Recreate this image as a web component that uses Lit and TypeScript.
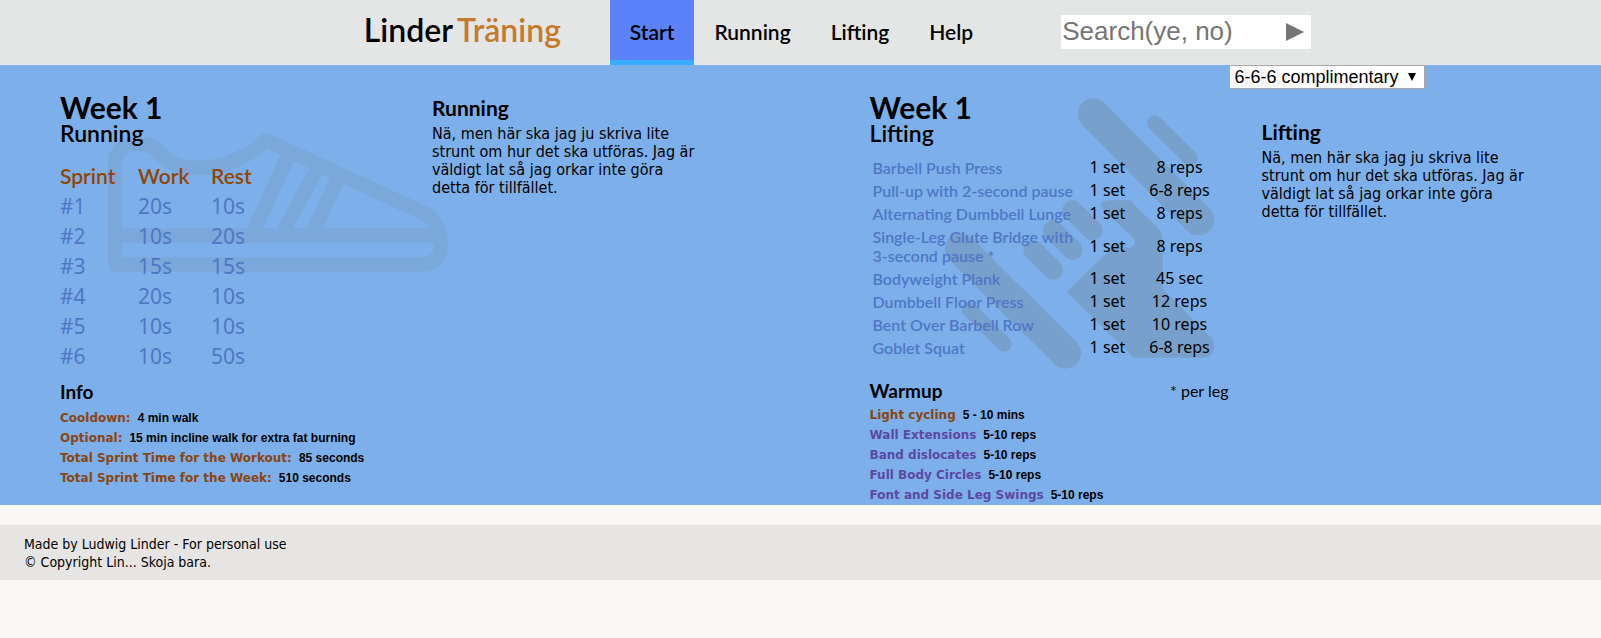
import { LitElement, html, css } from "lit";
import { customElement } from "lit/decorators.js";

const sprints = [
  ["#1", "20s", "10s"],
  ["#2", "10s", "20s"],
  ["#3", "15s", "15s"],
  ["#4", "20s", "10s"],
  ["#5", "10s", "10s"],
  ["#6", "10s", "50s"],
];

const lifts = [
  ["Barbell Push Press", "1 set", "8 reps"],
  ["Pull-up with 2-second pause", "1 set", "6-8 reps"],
  ["Alternating Dumbbell Lunge", "1 set", "8 reps"],
  ["Single-Leg Glute Bridge with 3-second pause *", "1 set", "8 reps"],
  ["Bodyweight Plank", "1 set", "45 sec"],
  ["Dumbbell Floor Press", "1 set", "12 reps"],
  ["Bent Over Barbell Row", "1 set", "10 reps"],
  ["Goblet Squat", "1 set", "6-8 reps"],
];

const info = [
  ["Cooldown:", "4 min walk"],
  ["Optional:", "15 min incline walk for extra fat burning"],
  ["Total Sprint Time for the Workout:", "85 seconds"],
  ["Total Sprint Time for the Week:", "510 seconds"],
];

const warmup = [
  ["Wall Extensions", "5-10 reps"],
  ["Band dislocates", "5-10 reps"],
  ["Full Body Circles", "5-10 reps"],
  ["Font and Side Leg Swings", "5-10 reps"],
];

const description =
  "Nä, men här ska jag ju skriva lite strunt om hur det ska utföras. Jag är väldigt lat så jag orkar inte göra detta för tillfället.";

@customElement("app-root")
export class AppRoot extends LitElement {
  static styles = css`
    :host {
      display: block;
      min-height: 100vh;
      background: #f9f8f6;
      color: #000;
      font-family: "DejaVu Sans Condensed", "DejaVu Sans", sans-serif;
    }
    * {
      box-sizing: border-box;
    }
    h1, h2, h3, p, dl, dd {
      margin: 0;
    }
    .top {
      display: flex;
      justify-content: center;
      align-items: center;
      height: 65px;
      padding-left: 74px;
      background: #e4e6e5;
    }
    .logo {
      width: 246px;
      padding-bottom: 5px;
      color: #000;
      font: 600 32px/40px Lato, sans-serif;
      white-space: nowrap;
      text-decoration: none;
    }
    .logo-accent {
      margin-left: 4px;
      color: #c47a2c;
    }
    .nav {
      display: flex;
      align-self: stretch;
    }
    .tab {
      padding: 0 20px;
      border-bottom: 5px solid transparent;
      color: #000;
      font: 600 21px/64px Lato, sans-serif;
      text-decoration: none;
    }
    .tab.active {
      border-color: #38acff;
      background: #5b82fb;
    }
    .search {
      display: flex;
      width: 250px;
      height: 34px;
      margin: 0 0 2px 68px;
      background: #fff;
    }
    .query {
      flex: 1;
      min-width: 0;
      padding: 0 1px;
      border: 0;
      background: none;
      font: 26px "Liberation Sans", sans-serif;
    }
    .query::placeholder {
      color: #757575;
    }
    .go {
      display: flex;
      align-items: center;
      padding: 0 7px;
      border: 0;
      background: none;
    }
    .main {
      display: grid;
      grid-template-columns: 1fr 1fr;
      background: #7db0ea;
    }
    .program {
      position: relative;
      display: flex;
      align-items: flex-start;
      padding-left: 60px;
    }
    .program.lifting {
      padding-left: 69px;
    }
    .mark {
      position: absolute;
      fill: none;
      stroke-linejoin: round;
    }
    .shoe {
      left: 107px;
      top: 67px;
      stroke: #7aa8db;
      stroke-width: 44px;
    }
    .dumbbell {
      left: 144px;
      top: 33px;
      stroke: #78a0cc;
      stroke-linecap: round;
    }
    .palm {
      fill: #78a0cc;
      stroke: none;
    }
    .plan {
      position: relative;
      width: 372px;
      padding-top: 25px;
    }
    .lifting .plan {
      width: 359px;
    }
    .week {
      font: 700 30px/34px Lato, sans-serif;
    }
    .kind {
      font: 600 23px/18px Lato, sans-serif;
    }
    .sprints {
      margin-top: 19px;
      border-collapse: collapse;
      color: #4f77c4;
      font: 21px/30px "Noto Sans", sans-serif;
      text-align: left;
      table-layout: fixed;
      width: 206px;
    }
    .sprints th, .sprints td {
      padding: 0;
      width: 73px;
    }
    .sprints th:first-child {
      width: 78px;
    }
    .sprints th {
      color: #914600;
      font: 600 21px/30px Lato, sans-serif;
    }
    .lifts {
      width: 100%;
      margin-top: 14px;
      border-collapse: collapse;
      table-layout: fixed;
    }
    .lifts td {
      padding: 2px 0;
      font: 16px/19px "Noto Sans", sans-serif;
      text-align: center;
    }
    .lifts .name {
      width: 212px;
      padding-left: 3px;
      color: #4f77c4;
      font: 600 16px/19px Lato, sans-serif;
      text-align: left;
    }
    .lifts .sets {
      width: 52px;
    }
    .lifts .reps {
      padding-right: 3px;
    }
    .extra {
      display: flex;
      justify-content: space-between;
      margin-top: 9px;
    }
    .lifting .extra {
      margin-top: 20px;
    }
    .sub {
      font: 700 19px/24px Lato, sans-serif;
    }
    .note {
      font: 16px/24px Lato, sans-serif;
    }
    .facts {
      margin-top: 4px;
      font: 700 12px/20px "Liberation Sans", sans-serif;
    }
    .lifting .facts {
      margin-top: 2px;
    }
    .fact {
      display: flex;
      gap: 7px;
    }
    .term {
      color: #8a4510;
      font-family: "DejaVu Sans", sans-serif;
    }
    .term a {
      color: #5c48a2;
      text-decoration: none;
    }
    .lifting .aside {
      display: flex;
      flex-direction: column;
    }
    .pick {
      width: 196px;
      height: 24px;
      padding: 0 5px;
      border: 1px solid #a9a9a9;
      border-radius: 0;
      appearance: none;
      background: #fff
        url("data:image/svg+xml,%3Csvg xmlns='http://www.w3.org/2000/svg' width='8' height='8'%3E%3Cpath d='M0 0h8L4 8z'/%3E%3C/svg%3E")
        no-repeat right 8px center;
      color: #000;
      font: 18px "Liberation Sans", sans-serif;
    }
    .about {
      max-width: 270px;
      padding-top: 31px;
    }
    .lifting .about {
      margin-left: 33px;
    }
    .about-title {
      padding-bottom: 5px;
      font: 700 21px/24px Lato, sans-serif;
    }
    .about-text {
      font-size: 16px;
      line-height: 18px;
    }
    .foot {
      margin-top: 20px;
      padding: 10px 24px 9px;
      background: #e6e5e3;
      font-size: 14px;
      line-height: 18px;
    }
  `;

  render() {
    return html`
      <header class="top">
        <a class="logo" href="#">Linder<span class="logo-accent">Träning</span></a>
        <nav class="nav">
          <a class="tab active" href="#start">Start</a>
          <a class="tab" href="#running">Running</a>
          <a class="tab" href="#lifting">Lifting</a>
          <a class="tab" href="#help">Help</a>
        </nav>
        <form class="search">
          <input class="query" type="text" placeholder="Search(ye, no)" aria-label="Search" />
          <button class="go" type="button" aria-label="Go">
            <svg width="18" height="18" viewBox="0 0 18 18"><path d="M0 0 18 9 0 18z" fill="#757575" /></svg>
          </button>
        </form>
      </header>
      <main class="main">
        <section class="program">
          <svg class="mark shoe" width="342" height="141" viewBox="200 156 1026 423" aria-hidden="true">
            <path d="M225 554V250C225 205 260 191 295 191C350 191 355 225 390 245C420 262 450 264 475 264C560 262 620 230 678 181L1150 399C1188 420 1202 460 1202 495C1202 530 1180 554 1145 554Z" />
            <path d="M225 467H1195M744 226 642 450M836 258 730 450M890 300 816 460" />
          </svg>
          <div class="plan">
            <h1 class="week">Week 1</h1>
            <h2 class="kind">Running</h2>
            <table class="sprints">
              <thead>
                <tr><th>Sprint</th><th>Work</th><th>Rest</th></tr>
              </thead>
              <tbody>
                ${sprints.map((row) => html`<tr>${row.map((cell) => html`<td>${cell}</td>`)}</tr>`)}
              </tbody>
            </table>
            <div class="extra"><h3 class="sub">Info</h3></div>
            <dl class="facts">
              ${info.map(([k, v]) => html`<div class="fact"><dt class="term">${k}</dt><dd>${v}</dd></div>`)}
            </dl>
          </div>
          <div class="aside">
            <div class="about">
              <h2 class="about-title">Running</h2>
              <p class="about-text">${description}</p>
            </div>
          </div>
        </section>
        <section class="program lifting">
          <svg class="mark dumbbell" width="270" height="272" viewBox="285 55 810 816" aria-hidden="true">
            <path stroke-width="94" d="M730 103 1045 420M332 508 646 820" />
            <path stroke-width="46" d="M914 130 1020 235M358 690 462 793" />
            <path stroke-width="60" d="M667 392 728 452M609 452 668 511M550 512 609 570" />
            <path class="palm" d="M775 362H840L922 443Q938 460 938 480V628L1080 770Q1092 784 1092 800Q1090 834 1058 834H852L650 636L806 486L826 503Q842 510 852 495Q858 485 850 475L760 392Q740 367 775 362Z" />
          </svg>
          <div class="plan">
            <h1 class="week">Week 1</h1>
            <h2 class="kind">Lifting</h2>
            <table class="lifts">
              <tbody>
                ${lifts.map(
                  ([name, sets, reps]) =>
                    html`<tr><td class="name">${name}</td><td class="sets">${sets}</td><td class="reps">${reps}</td></tr>`
                )}
              </tbody>
            </table>
            <div class="extra">
              <h3 class="sub">Warmup</h3>
              <span class="note">* per leg</span>
            </div>
            <dl class="facts">
              <div class="fact"><dt class="term">Light cycling</dt><dd>5 - 10 mins</dd></div>
              ${warmup.map(
                ([k, v]) => html`<div class="fact"><dt class="term"><a href="#">${k}</a></dt><dd>${v}</dd></div>`
              )}
            </dl>
          </div>
          <div class="aside">
            <select class="pick" aria-label="Program">
              <option>6-6-6 complimentary</option>
            </select>
            <div class="about">
              <h2 class="about-title">Lifting</h2>
              <p class="about-text">${description}</p>
            </div>
          </div>
        </section>
      </main>
      <footer class="foot">
        <p>Made by Ludwig Linder - For personal use</p>
        <p>© Copyright Lin... Skoja bara.</p>
      </footer>
    `;
  }
}
